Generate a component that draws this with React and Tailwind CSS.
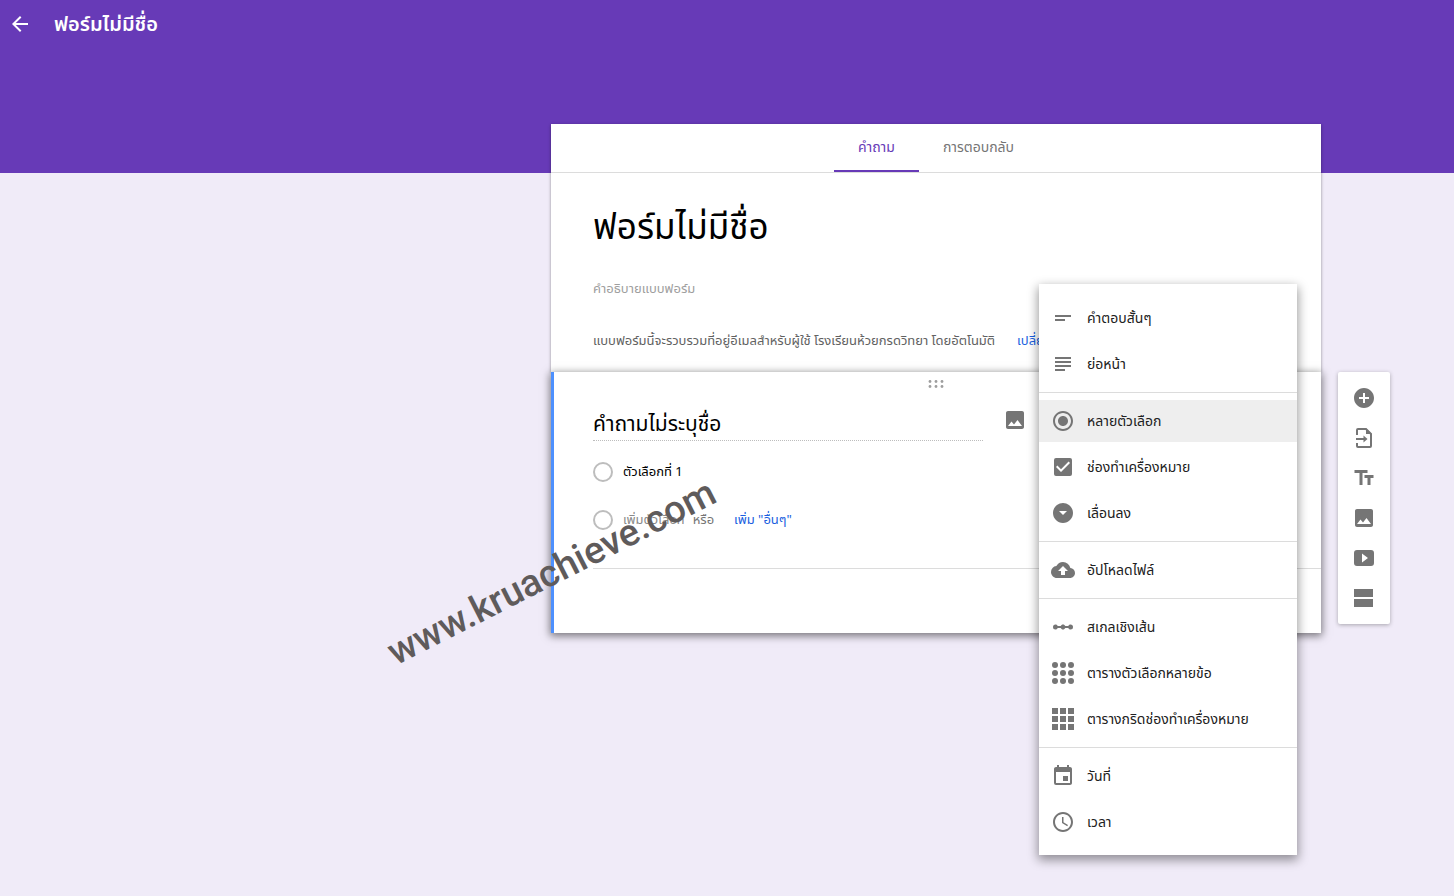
import { useState } from "react";
import {
  MdAccessTime,
  MdAddCircle,
  MdArrowBack,
  MdArrowDropDownCircle,
  MdCheckBox,
  MdCloudUpload,
  MdEvent,
  MdImage,
  MdLinearScale,
  MdRadioButtonChecked,
  MdShortText,
  MdSubject,
  MdTextFields
} from "react-icons/md";

const GRID = [4, 12, 20];

const DotGridIcon = ({ className }) => (
  <svg viewBox="0 0 24 24" fill="currentColor" className={className}>
    {GRID.map((y) => GRID.map((x) => <circle key={`${x}-${y}`} cx={x} cy={y} r="3" />))}
  </svg>
);

const SquareGridIcon = ({ className }) => (
  <svg viewBox="0 0 24 24" fill="currentColor" className={className}>
    {GRID.map((y) => GRID.map((x) => <rect key={`${x}-${y}`} x={x - 3} y={y - 3} width="6" height="6" />))}
  </svg>
);

const ImportIcon = ({ className }) => (
  <svg viewBox="0 0 24 24" fill="none" stroke="currentColor" strokeWidth="2" className={className}>
    <path d="M5 9V4a1 1 0 0 1 1-1h8l5 5v12a1 1 0 0 1-1 1H6a1 1 0 0 1-1-1v-3" />
    <path d="M4 13h9" />
    <path d="M14 2.5V8h5.5z" fill="currentColor" stroke="none" />
    <path d="M11.5 9.5L15.5 13l-4 3.5z" fill="currentColor" stroke="none" />
  </svg>
);

const VideoIcon = ({ className }) => (
  <svg viewBox="0 0 24 24" fill="currentColor" className={className}>
    <path fillRule="evenodd" d="M5 4h14a3 3 0 0 1 3 3v10a3 3 0 0 1-3 3H5a3 3 0 0 1-3-3V7a3 3 0 0 1 3-3zm5 3.5v9l6-4.5z" />
  </svg>
);

const SectionIcon = ({ className }) => (
  <svg viewBox="0 0 24 24" fill="currentColor" className={className}>
    <path d="M2 3h19v8H2zM2 13h19v8H2z" />
  </svg>
);

const TABS = [
  { id: "questions", label: "คำถาม" },
  { id: "responses", label: "การตอบกลับ" }
];

const MENU = [
  [
    { id: "short", label: "คำตอบสั้นๆ", icon: MdShortText },
    { id: "paragraph", label: "ย่อหน้า", icon: MdSubject }
  ],
  [
    { id: "choice", label: "หลายตัวเลือก", icon: MdRadioButtonChecked },
    { id: "checkbox", label: "ช่องทำเครื่องหมาย", icon: MdCheckBox },
    { id: "dropdown", label: "เลื่อนลง", icon: MdArrowDropDownCircle }
  ],
  [{ id: "upload", label: "อัปโหลดไฟล์", icon: MdCloudUpload }],
  [
    { id: "scale", label: "สเกลเชิงเส้น", icon: MdLinearScale },
    { id: "choiceGrid", label: "ตารางตัวเลือกหลายข้อ", icon: DotGridIcon },
    { id: "checkGrid", label: "ตารางกริดช่องทำเครื่องหมาย", icon: SquareGridIcon }
  ],
  [
    { id: "date", label: "วันที่", icon: MdEvent },
    { id: "time", label: "เวลา", icon: MdAccessTime }
  ]
];

const TOOLS = [
  { label: "เพิ่มคำถาม", icon: MdAddCircle },
  { label: "นำเข้าคำถาม", icon: ImportIcon },
  { label: "เพิ่มชื่อและรายละเอียด", icon: MdTextFields },
  { label: "เพิ่มรูปภาพ", icon: MdImage },
  { label: "เพิ่มวิดีโอ", icon: VideoIcon },
  { label: "เพิ่มส่วน", icon: SectionIcon }
];

const TypeMenu = ({ value, onChange }) => (
  <div
    role="menu"
    className="absolute -top-22 right-6 z-10 w-[258px] divide-y divide-[#dcdcdc] bg-white pt-1.5 pb-[5px] shadow-[0_4px_10px_1px_rgba(0,0,0,0.4)]"
  >
    {MENU.map((group) => (
      <div key={group[0].id} className="flex flex-col gap-1 py-[7px]">
        {group.map((item) => {
          const Icon = item.icon;
          return (
            <button
              key={item.id}
              role="menuitem"
              onClick={() => onChange(item.id)}
              className={`flex h-[42px] items-center gap-3 px-3 text-left text-sm text-[#212121] ${
                value === item.id ? "bg-[#eeeeee]" : "bg-white"
              }`}
            >
              <Icon className="h-6 w-6 shrink-0 text-[#757575]" />
              {item.label}
            </button>
          );
        })}
      </div>
    ))}
  </div>
);

const Toolbar = () => (
  <div className="mt-[248px] flex w-[52px] shrink-0 flex-col items-center gap-4 self-start rounded-xs bg-white py-3.5 shadow-[0_1px_4px_rgba(0,0,0,0.3)]">
    {TOOLS.map((tool) => {
      const Icon = tool.icon;
      return (
        <button key={tool.label} aria-label={tool.label} className="text-[#757575]">
          <Icon className="h-6 w-6" />
        </button>
      );
    })}
  </div>
);

const QuestionCard = () => {
  const [type, setType] = useState("choice");

  return (
    <section className="relative border-l-3 border-[#4d90fe] bg-white shadow-[0_2px_8px_1px_rgba(0,0,0,0.5)]">
      <div className="flex h-6 items-center justify-center pr-[3px]">
        <svg viewBox="0 0 16 8" fill="#9e9e9e" className="h-2 w-4">
          {[2, 8, 14].map((x) => (
            <g key={x}>
              <circle cx={x} cy="1.5" r="1.4" />
              <circle cx={x} cy="6.5" r="1.4" />
            </g>
          ))}
        </svg>
      </div>

      <div className="pl-[39px]">
        <div className="mt-3 flex items-start gap-5">
          <input
            aria-label="คำถาม"
            defaultValue="คำถามไม่ระบุชื่อ"
            className="h-[33px] w-[390px] border-b border-dotted border-[#bdbdbd] text-[21px] text-black outline-none"
          />
          <button aria-label="เพิ่มรูปภาพ" className="text-[#757575]">
            <MdImage className="h-6 w-6" />
          </button>
        </div>

        <div className="mt-[19px] flex flex-col gap-6 text-[13px]">
          <label className="flex h-6 items-center gap-2.5 text-black">
            <input type="radio" name="option" className="h-5 w-5 appearance-none rounded-full border-2 border-[#bdbdbd]" />
            ตัวเลือกที่ 1
          </label>
          <div className="flex h-6 items-center">
            <label className="flex items-center gap-2.5 text-[#8a8a8a]">
              <input type="radio" name="option" className="h-5 w-5 appearance-none rounded-full border-2 border-[#bdbdbd]" />
              เพิ่มตัวเลือก
            </label>
            <span className="ml-2 text-[#757575]">หรือ</span>
            <a href="#other" className="ml-5 text-[#1a5fe0]">เพิ่ม "อื่นๆ"</a>
          </div>
        </div>

        <div className="mt-9 h-[65px] border-t border-[#dcdcdc]" />
      </div>

      <TypeMenu value={type} onChange={setType} />
    </section>
  );
};

function App() {
  const [activeTab, setActiveTab] = useState("questions");

  return (
    <div className="relative min-h-screen overflow-hidden bg-[#f0ebf8] font-['Noto_Sans','Noto_Sans_Thai',sans-serif]">
      <header className="h-[173px] bg-[#673ab7] text-white">
        <div className="flex h-12 items-center gap-[22px] px-2">
          <button aria-label="กลับ">
            <MdArrowBack className="h-6 w-6" />
          </button>
          <h1 className="text-xl font-semibold">ฟอร์มไม่มีชื่อ</h1>
        </div>
      </header>

      <main className="-mt-[49px] flex justify-end gap-[17px] pr-16">
        <div className="w-[770px]">
          <section className="bg-white shadow-[0_1px_3px_rgba(0,0,0,0.4)]">
            <nav className="flex h-[49px] justify-center border-b border-[#dcdcdc]">
              {TABS.map((tab) => (
                <button
                  key={tab.id}
                  onClick={() => setActiveTab(tab.id)}
                  className={`border-b-2 px-6 text-sm ${
                    activeTab === tab.id
                      ? "border-[#673ab7] text-[#673ab7]"
                      : "border-transparent text-[#757575]"
                  }`}
                >
                  {tab.label}
                </button>
              ))}
            </nav>

            <div className="px-[42px] pt-7 pb-5">
              <input
                aria-label="ชื่อแบบฟอร์ม"
                defaultValue="ฟอร์มไม่มีชื่อ"
                className="h-[50px] w-full text-[35px] text-black outline-none"
              />
              <input
                aria-label="คำอธิบาย"
                placeholder="คำอธิบายแบบฟอร์ม"
                className="mt-[25px] h-6 w-full text-[13px] outline-none placeholder:text-[#9e9e9e]"
              />
              <p className="mt-7 h-6 text-[13px] leading-6 whitespace-nowrap text-[#616161]">
                แบบฟอร์มนี้จะรวบรวมที่อยู่อีเมลสำหรับผู้ใช้ โรงเรียนห้วยกรดวิทยา โดยอัตโนมัติ
                <a href="#settings" className="ml-[22px] text-[#1a5fe0]">เปลี่ยน</a>
              </p>
            </div>
          </section>
          <QuestionCard />
        </div>
        <Toolbar />
      </main>

      <div className="pointer-events-none absolute top-[548px] left-[370px] -rotate-27 font-[Roboto,sans-serif] text-[38px] leading-12 font-medium text-[#5f5b5b]">
        www.kruachieve.com
      </div>
    </div>
  );
}

export default App;
